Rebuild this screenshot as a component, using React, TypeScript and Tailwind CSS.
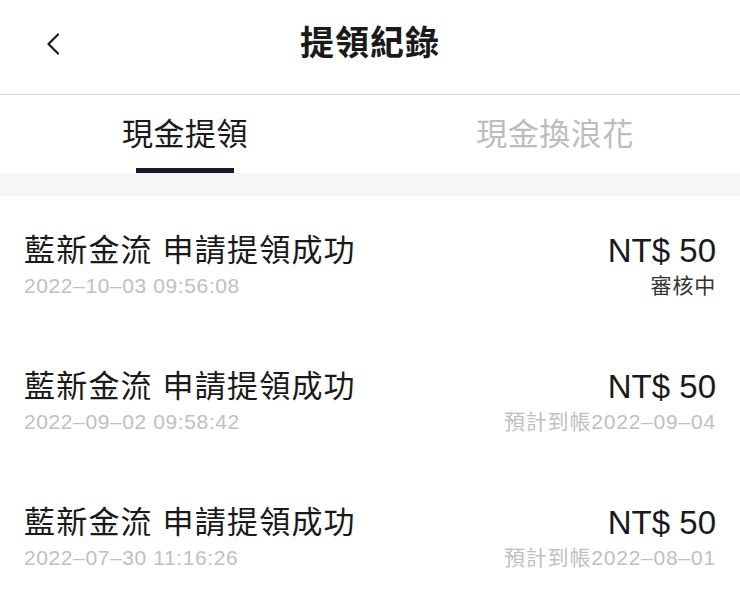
import { useState } from 'react';

const font = { fontFamily: '"Liberation Sans", "Noto Sans CJK TC", sans-serif' };

type Record = { date: string; amount: string; status: string; pending?: boolean };

const records: Record[] = [
  { date: '2022–10–03 09:56:08', amount: 'NT$ 50', status: '審核中', pending: true },
  { date: '2022–09–02 09:58:42', amount: 'NT$ 50', status: '預計到帳2022–09–04' },
  { date: '2022–07–30 11:16:26', amount: 'NT$ 50', status: '預計到帳2022–08–01' },
];

export default function App() {
  const [tab, setTab] = useState(0);
  const tabs = ['現金提領', '現金換浪花'];

  return (
    <div className="w-[740px] h-[595px] overflow-hidden bg-white text-[#1a1a1a]" style={font}>
      {/* Header */}
      <div className="relative h-[95px] border-b border-[#d9d9d9] flex items-start justify-center">
        <button aria-label="返回" className="absolute left-[44px] top-[32px] w-[18px] h-[24px] flex items-center justify-center">
          <svg width="14" height="22" viewBox="0 0 14 22" fill="none">
            <path d="M12 1.5 L2.5 11 L12 20.5" stroke="#1a1a1a" strokeWidth="2.2" strokeLinecap="round" strokeLinejoin="round" />
          </svg>
        </button>
        <h1 className="mt-[22px] text-[34px] leading-[42px] font-bold tracking-[1px]">提領紀錄</h1>
      </div>

      {/* Tabs */}
      <div className="flex h-[78px]">
        {tabs.map((t, i) => (
          <button
            key={t}
            onClick={() => setTab(i)}
            className="flex-1 flex flex-col items-center justify-end"
          >
            <span
              className={`text-[31px] leading-[40px] tracking-[0.5px] ${i === tab ? 'text-[#1a1a1a]' : 'text-[#bdbdbd]'}`}
            >
              {t}
            </span>
            <span className={`mt-[13px] h-[5px] w-[98px] ${i === tab ? 'bg-[#1a1a2e]' : 'bg-transparent'}`} />
          </button>
        ))}
      </div>

      <div className="h-[23px] bg-[#f6f6f6]" />

      {/* List */}
      <div>
        {records.map((r, i) => (
          <div key={i} className="flex justify-between px-[24px] pt-[37px] pb-[31px]">
            <div>
              <div className="text-[31px] leading-[36px] tracking-[1.2px] text-[#1a1a1a]">藍新金流 申請提領成功</div>
              <div className="mt-[2px] text-[21px] leading-[30px] tracking-[0.6px] text-[#c0c0c0]">{r.date}</div>
            </div>
            <div className="flex flex-col items-end">
              <div className="text-[33px] leading-[36px] text-[#1a1a1a]">{r.amount}</div>
              <div
                className={`mt-[2px] text-[21px] leading-[30px] tracking-[0.8px] ${r.pending ? 'text-[#333333]' : 'text-[#c0c0c0]'}`}
              >
                {r.status}
              </div>
            </div>
          </div>
        ))}
      </div>
    </div>
  );
}
